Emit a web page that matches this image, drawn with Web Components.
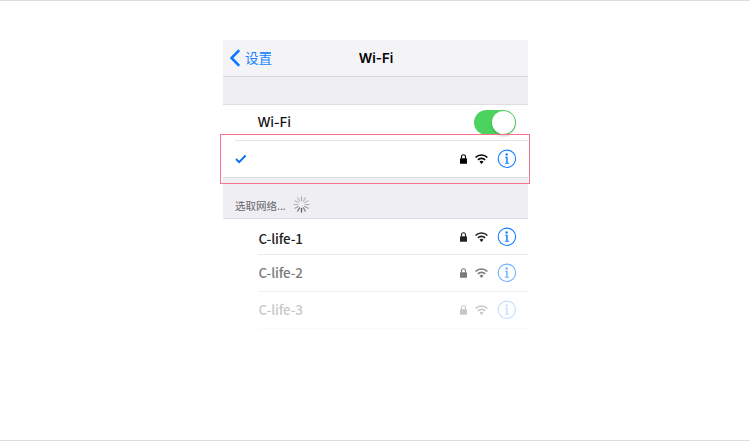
<!DOCTYPE html>
<html lang="zh-CN">
<head>
<meta charset="utf-8">
<title>Wi-Fi</title>
<style>
body{margin:0;background:#fff}
</style>
</head>
<body>
<wifi-page></wifi-page>
<script>
class BaseElement extends HTMLElement {
  connectedCallback() {
    if (this.shadowRoot) return;
    this.attachShadow({ mode: 'open' }).innerHTML = this.render();
  }
}

customElements.define('icon-lock', class extends BaseElement {
  render() {
    return `<style>:host{display:block;width:7px;height:10px}svg{display:block}</style>
    <svg width="7" height="10" viewBox="0 0 7 10"><rect y="4.2" width="7" height="5.6" rx=".6" fill="currentColor"/><path d="M1.5 4.6V2.8a2 2 0 0 1 4 0v1.8" fill="none" stroke="currentColor" stroke-width="1.1"/></svg>`;
  }
});

customElements.define('icon-signal', class extends BaseElement {
  render() {
    return `<style>:host{display:block;width:13px;height:10px}svg{display:block}</style>
    <svg width="13" height="10" viewBox="0 0 13 10"><g fill="none" stroke="currentColor" stroke-width="1.6"><path d="M.6 3.5a8.3 8.3 0 0 1 11.8 0"/><path d="M2.9 5.9a5.1 5.1 0 0 1 7.2 0"/></g><path d="M6.5 9.9 4.5 7.8a2.8 2.8 0 0 1 4 0z" fill="currentColor"/></svg>`;
  }
});

customElements.define('icon-info', class extends BaseElement {
  render() {
    return `<style>:host{display:block;width:20px;height:20px;color:#1482ff}svg{display:block}</style>
    <svg width="20" height="20" viewBox="0 0 20 20"><circle cx="9.9" cy="9.8" r="8.7" fill="none" stroke="currentColor" stroke-width="1.15"/><circle cx="9.7" cy="5.5" r="1.2" fill="currentColor"/><path d="M8 7.8h2.7v6h1.4v.9H7.9v-.9h1.3V8.7H8z" fill="currentColor"/></svg>`;
  }
});

customElements.define('busy-spinner', class extends BaseElement {
  render() {
    const shades = [.42, .35, .3, .42, .55, .75, .95, .8, .5, .38, .32, .3];
    const spokes = shades.map((o, i) =>
      `<path d="M8.5 .9v3.8" transform="rotate(${i * 30} 8.5 8.5)" opacity="${o}"/>`).join('');
    return `<style>:host{display:block;width:17px;height:17px}svg{display:block}</style>
    <svg width="17" height="17" viewBox="0 0 17 17" stroke="#55555a" stroke-width="1.2" stroke-linecap="round">${spokes}</svg>`;
  }
});

customElements.define('toggle-switch', class extends BaseElement {
  render() {
    return `<style>
      :host{display:flex;justify-content:flex-end;box-sizing:border-box;width:42px;height:25px;padding:1px;border-radius:13px;background:#4cd35f}
      i{width:23px;height:23px;border-radius:50%;background:#fff;box-shadow:0 2px 3px rgba(0,0,0,.2)}
    </style><i></i>`;
  }
});

customElements.define('nav-bar', class extends BaseElement {
  render() {
    return `<style>
      :host{display:grid;grid-template-columns:1fr auto 1fr;align-items:center;box-sizing:border-box;height:37px;background:#f4f4f7;border-bottom:1px solid #d8d8dc;padding:0 6px 0 7px}
      .back{display:flex;align-items:center;gap:5px;color:#1482ff;font:13.5px/20px "Noto Sans CJK SC",sans-serif}
      .label{padding-bottom:2px}
      svg{display:block}
      .title{font:600 13.3px/20px Inter,sans-serif;color:#000}
    </style>
    <div class="back"><svg width="10" height="18" viewBox="0 0 10 18"><path d="M9.2 1.2 1.5 9l7.7 7.8" fill="none" stroke="#0b78ff" stroke-width="2.5"/></svg><span class="label"><slot name="back"></slot></span></div>
    <div class="title"><slot></slot></div>`;
  }
});

customElements.define('network-row', class extends BaseElement {
  render() {
    return `<style>
      :host{display:flex;align-items:center;box-sizing:border-box;height:var(--h,36px);padding:0 11px var(--pb,0) 35.5px;background:linear-gradient(var(--line,#e9e9eb),var(--line,#e9e9eb)) right bottom/270px 1px no-repeat}
      .name{flex:1;padding:var(--nt,0) 0 var(--nb,0);font:500 13.4px/20px "Noto Sans CJK SC",sans-serif;letter-spacing:-.15px;color:#222}
      .icons{display:flex;align-items:center;color:#222}
      .name,.icons{opacity:var(--fade,1)}
      icon-signal{margin:0 9px 0 8px}
    </style>
    <div class="name"><slot></slot></div>
    <div class="icons"><icon-lock></icon-lock><icon-signal></icon-signal><icon-info></icon-info></div>`;
  }
});

customElements.define('wifi-page', class extends BaseElement {
  render() {
    return `<style>
      :host{display:block;position:relative;box-sizing:border-box;width:750px;height:441px;border:solid #ddd;border-width:1px 0;padding:39px 222px 0 223px;background:#fff}
      .gap{box-sizing:border-box;height:28px;background:#efeef3;border-bottom:1px solid #dfdfe3}
      .switch{display:flex;align-items:center;justify-content:space-between;box-sizing:border-box;height:36px;padding:0 12px 1px 34.5px;font:500 13px/20px Inter,sans-serif;color:#111;background:linear-gradient(#e4e4e6,#e4e4e6) right bottom/293px 1px no-repeat}
      .switch span{padding-bottom:1px}
      .current{display:flex;align-items:center;box-sizing:border-box;height:37px;padding:0 11px 0 12px;border-bottom:1px solid #dcdce1}
      .current svg{display:block;margin-right:auto}
      .current icon-signal{margin:0 9px 0 8px}
      .heading{display:flex;align-items:center;gap:7px;box-sizing:border-box;height:41px;padding:13px 12px 0;background:#efeef3;border-bottom:1px solid #dedee2;font:10.5px/16px "Noto Sans CJK SC",sans-serif;color:#66666b}
      .heading span{padding-top:3px}
      .highlight{position:absolute;box-sizing:border-box;left:220px;top:133px;width:310px;height:50px;border:1px solid #f8728d}
    </style>
    <nav-bar><span slot="back">设置</span>Wi-Fi</nav-bar>
    <div class="gap"></div>
    <div class="switch"><span>Wi-Fi</span><toggle-switch></toggle-switch></div>
    <div class="current">
      <svg width="12" height="10" viewBox="0 0 12 10"><path d="m1 5 3.1 3.1L10.6 1.5" fill="none" stroke="#0b70f5" stroke-width="1.9"/></svg>
      <icon-lock></icon-lock><icon-signal></icon-signal><icon-info></icon-info>
    </div>
    <div class="heading"><span>选取网络...</span><busy-spinner></busy-spinner></div>
    <network-row style="--nt:2px">C-life-1</network-row>
    <network-row style="--h:37px;--pb:1px;--nb:2px;--fade:.6;--line:#f0f0f1">C-life-2</network-row>
    <network-row style="--h:37px;--pb:1px;--nb:2px;--fade:.25;--line:#fafafa">C-life-3</network-row>
    <div class="highlight"></div>`;
  }
});
</script>
</body>
</html>
